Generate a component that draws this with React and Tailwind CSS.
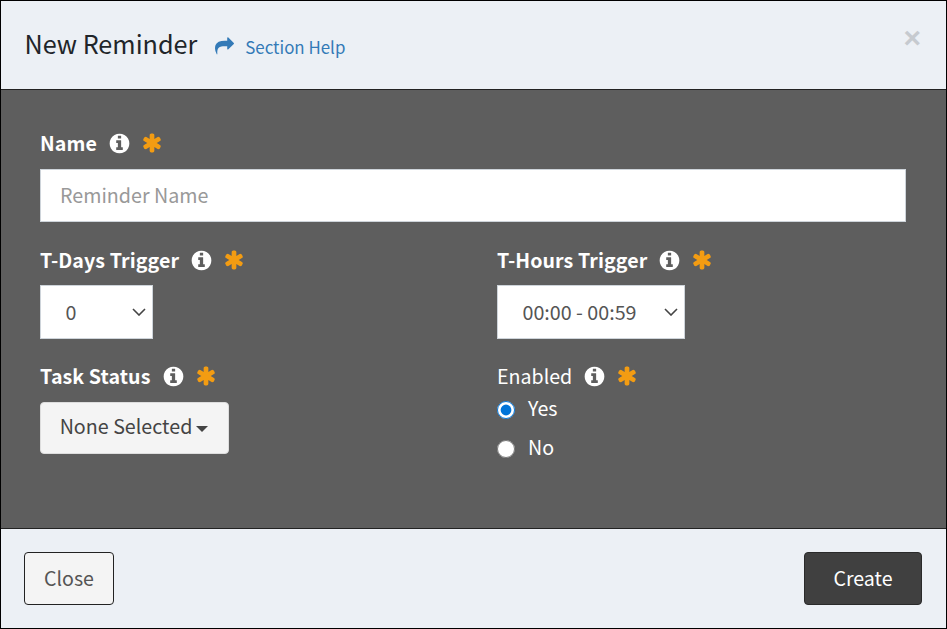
const INFO = 'M1152 1376v-160q0-14-9-23t-23-9h-96v-512q0-14-9-23t-23-9h-320q-14 0-23 9t-9 23v160q0 14 9 23t23 9h96v320h-96q-14 0-23 9t-9 23v160q0 14 9 23t23 9h448q14 0 23-9t9-23zm-128-896v-160q0-14-9-23t-23-9h-192q-14 0-23 9t-9 23v160q0 14 9 23t23 9h192q14 0 23-9t9-23zm640 416q0 209-103 385.5t-279.5 279.5-385.5 103-385.5-103-279.5-279.5-103-385.5 103-385.5 279.5-279.5 385.5-103 385.5 103 279.5 279.5 103 385.5z'
const ASTERISK = 'M1546 1050q46 26 59.5 77.5t-12.5 97.5l-64 110q-26 46-77.5 59.5t-97.5-12.5l-266-153v307q0 52-38 90t-90 38h-128q-52 0-90-38t-38-90v-307l-266 153q-46 26-97.5 12.5t-77.5-59.5l-64-110q-26-46-12.5-97.5t59.5-77.5l266-154-266-154q-46-26-59.5-77.5t12.5-97.5l64-110q26-46 77.5-59.5t97.5 12.5l266 153v-307q0-52 38-90t90-38h128q52 0 90 38t38 90v307l266-153q46-26 97.5-12.5t77.5 59.5l64 110q26 46 12.5 97.5t-59.5 77.5l-266 154z'
const SHARE = 'M1792 640q0 26-19 45l-512 512q-19 19-45 19t-45-19-19-45v-256h-224q-713 0-875-403-53-134-53-333 0-166 127-451 3-7 10.5-24t13.5-30 13-22q12-17 28-17 15 0 23.5 10t8.5 25q0 9-2.5 26.5t-2.5 23.5q-5 68-5 123 0 101 17.5 181t48.5 138.5 80 101 105.5 69.5 133 42.5 154 21.5 175.5 6h224v-256q0-26 19-45t45-19 45 19l512 512q19 19 19 45z'

function Glyph({ d, size, className, flip }) {
  return (
    <svg viewBox="0 0 1792 1792" width={size} height={size} fill="currentColor" className={className}>
      <path d={d} transform={flip ? 'translate(0,1344) scale(1,-1)' : undefined} />
    </svg>
  )
}

function FieldLabel({ text, bold = true }) {
  return (
    <div className="flex items-center h-7 mb-[11px]">
      <span className={`text-[19.6px] leading-7 text-white ${bold ? 'font-bold tracking-[0.1px]' : ''}`}>{text}</span>
      <Glyph d={INFO} size={23} className="ml-[11px] text-white" />
      <Glyph d={ASTERISK} size={22} className="ml-[10px] text-[#f39c12]" />
    </div>
  )
}

function Select({ value, width }) {
  return (
    <div className={`relative ${width}`}>
      <select className="appearance-none w-full h-[54px] bg-white border border-[#ced4da] pl-[24.5px] text-[19.7px] text-[#555] rounded-none">
        <option>{value}</option>
      </select>
      {/* chevron sits over the select */}
      <svg viewBox="0 0 14 8" width="14" height="8" fill="none" stroke="#444" strokeWidth="1.6" className="absolute right-[7px] top-[23px] pointer-events-none">
        <path d="M1 1l6 6 6-6" />
      </svg>
    </div>
  )
}

export default function App() {
  return (
    <div className="w-[947px] h-[629px] flex flex-col border border-black bg-[#5e5e5e] font-['Noto_Sans_CJK_JP','Noto_Sans',sans-serif]">
      <div className="h-[89px] shrink-0 bg-[#ecf0f5] border-b border-[#222] flex items-center pl-[23.5px] pr-[25px]">
        <h4 className="text-[25.2px] leading-[36px] mb-[4px] text-[#212529]">New Reminder</h4>
        <a className="ml-[18px] mt-[3px] flex items-center text-[16.9px] leading-6 text-[#337ab7]">
          <Glyph d={SHARE} size={19} flip className="mb-[2px]" />
          <span className="ml-[11px]">Section Help</span>
        </a>
        <span className="ml-auto mb-[14px] text-[30px] leading-none font-bold font-['Liberation_Sans',sans-serif] text-[#c6cacf]">×</span>
      </div>

      <form className="flex-1 pl-[39px] pr-10 pt-[39px]">
        <FieldLabel text="Name" />
        <input
          placeholder="Reminder Name"
          className="block mt-3 w-full h-[53px] bg-white border border-[#ced4da] pl-[19px] pr-5 pb-[2px] text-[19.7px] text-[#555] placeholder:text-[#999] outline-none"
        />

        <div className="grid grid-cols-2 gap-x-12 mt-6">
          <div>
            <FieldLabel text="T-Days Trigger" />
            <Select value="0" width="w-[113px]" />
          </div>
          <div>
            <FieldLabel text="T-Hours Trigger" />
            <Select value="00:00 - 00:59" width="w-[188px]" />
          </div>
          <div className="mt-[23px]">
            <FieldLabel text="Task Status" />
            <button type="button" className="mt-3 w-[189px] h-[52px] pb-[4px] pr-[1px] rounded-[4px] bg-[#f4f4f4] border border-[#ddd] flex items-center justify-center text-[19.7px] text-[#444]">
              None Selected
              <span className="ml-[4px] mt-[5px] border-x-[6px] border-x-transparent border-t-[6px] border-t-[#444]" />
            </button>
          </div>
          <div className="mt-[23px]">
            <FieldLabel text="Enabled" bold={false} />
            <div className="-mt-[6px] flex flex-col gap-[11px] text-[19.6px] text-white">
              <label className="flex items-center h-7 pb-[2px] gap-[13px]">
                <input type="radio" name="enabled" defaultChecked className="w-[18px] h-[18px] m-0 mt-[4px] accent-[#0074d9]" />
                Yes
              </label>
              <label className="flex items-center h-7 pb-[2px] gap-[13px]">
                <input type="radio" name="enabled" className="w-[18px] h-[18px] m-0 mt-[4px] accent-[#0074d9]" />
                No
              </label>
            </div>
          </div>
        </div>
      </form>

      <div className="h-[100px] shrink-0 bg-[#ecf0f5] border-t border-[#222] flex items-center justify-between pl-[23px] pr-6">
        <button className="w-[90px] h-[53px] pb-[2px] rounded-[4px] bg-[#f4f4f4] border border-[#222] text-[19.6px] text-[#555]">Close</button>
        <button className="w-[118px] h-[53px] pb-[2px] rounded-[4px] bg-[#404040] border border-[#2a2a2a] text-[19.6px] text-white">Create</button>
      </div>
    </div>
  )
}
